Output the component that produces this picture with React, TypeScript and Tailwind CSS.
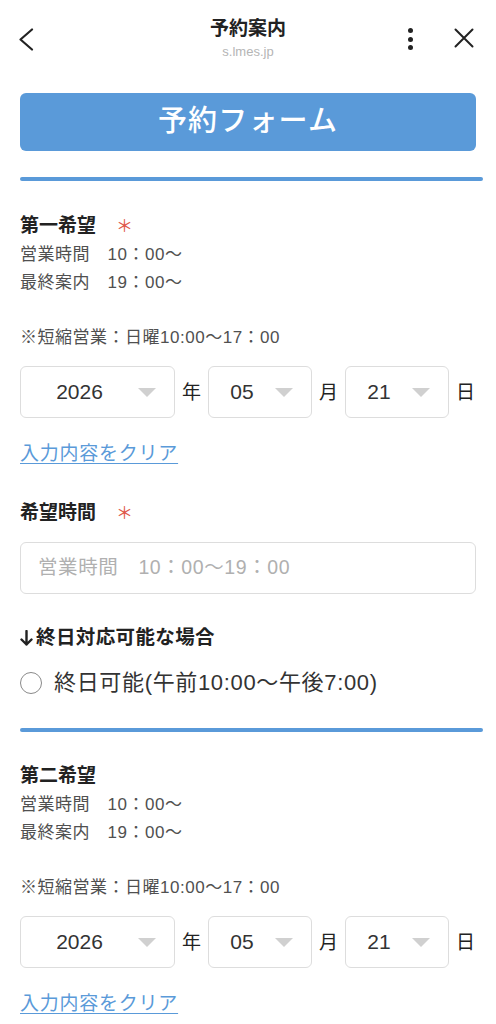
import { ReactNode } from "react";

const FONT = { fontFamily: '"Liberation Sans", "Noto Sans CJK JP", sans-serif' };

const SelectBox = ({ value, width }: { value: string; width: string }) => (
    <div className={`${width} h-[52px] flex items-center border border-[#dddddd] rounded-[6px] bg-white pr-[18px]`}>
        <span className="flex-1 text-center text-[21px] text-[#333333]">{value}</span>
        <svg width="18" height="9" viewBox="0 0 18 9">
            <path d="M0 0 L18 0 L9 9 Z" fill="#d0d0d0" />
        </svg>
    </div>
);

const Unit = ({ children }: { children: ReactNode }) => (
    <span className="w-[19px] text-[19px] leading-none text-[#222222]">{children}</span>
);

const DateRow = () => (
    <div className="flex items-center gap-[7px]">
        <SelectBox value="2026" width="w-[155px]" />
        <Unit>年</Unit>
        <SelectBox value="05" width="w-[104px]" />
        <Unit>月</Unit>
        <SelectBox value="21" width="w-[104px]" />
        <Unit>日</Unit>
    </div>
);

const Label = ({ text, required }: { text: string; required?: boolean }) => (
    <div className="flex items-center h-[28px]">
        <span className="text-[19px] font-bold leading-[28px] text-[#222222]">{text}</span>
        {required && <span className="ml-[20px] text-[17px] leading-none text-[#e0584a]">＊</span>}
    </div>
);

const Section = ({ title, required }: { title: string; required?: boolean }) => (
    <div>
        <Label text={title} required={required} />
        <div className="mt-[1px] text-[17px] leading-[27.5px] tracking-[0.03em] text-[#505050]">
            <p>営業時間　10：00〜</p>
            <p>最終案内　19：00〜</p>
            <p>&nbsp;</p>
            <p>※短縮営業：日曜10:00〜17：00</p>
        </div>
        <div className="mt-[15px]">
            <DateRow />
        </div>
        <a className="block mt-[22px] text-[19px] leading-[28px] tracking-[0.04em] text-[#5a9ad9] underline underline-offset-[3px]">
            入力内容をクリア
        </a>
    </div>
);

const Header = () => (
    <div className="h-[80px] flex items-start justify-between px-[18px]">
        <div className="w-[80px] pt-[28px]">
            <svg width="16" height="23" viewBox="0 0 16 23">
                <path d="M14 1.5 L2.5 11.5 L14 21.5" fill="none" stroke="#222222" strokeWidth="2.2" strokeLinecap="round" strokeLinejoin="round" />
            </svg>
        </div>
        <div className="flex flex-col items-center pt-[17px]">
            <span className="text-[19px] font-bold leading-[24px] text-[#222222]">予約案内</span>
            <span className="mt-[3px] text-[13px] leading-[16px] text-[#b5b5b5]">s.lmes.jp</span>
        </div>
        <div className="w-[80px] flex items-start justify-end gap-[41px] pt-[28px] pr-[4px]">
            <div className="flex flex-col items-center gap-[3.5px]">
                <span className="w-[5px] h-[5px] rounded-full bg-[#222222]" />
                <span className="w-[5px] h-[5px] rounded-full bg-[#222222]" />
                <span className="w-[5px] h-[5px] rounded-full bg-[#222222]" />
            </div>
            <svg width="20" height="20" viewBox="0 0 20 20">
                <path d="M1.5 1.5 L18.5 18.5 M18.5 1.5 L1.5 18.5" fill="none" stroke="#222222" strokeWidth="2" strokeLinecap="round" />
            </svg>
        </div>
    </div>
);

const App = () => {
    return (
        <div className="w-[496px] min-h-[1024px] bg-white overflow-hidden" style={FONT}>
            <Header />
            <div className="px-[20px] pb-[40px]">
                <div className="mt-[13px] h-[58px] rounded-[6px] bg-[#5a9ad9] flex items-center justify-center">
                    <span className="text-[29px] font-medium text-white tracking-[0.04em]">予約フォーム</span>
                </div>
                <div className="mt-[26px] h-[4px] w-[463px] rounded-full bg-[#5a9ad9]" />

                <div className="mt-[31px]">
                    <Section title="第一希望" required />
                </div>

                <div className="mt-[31px]">
                    <Label text="希望時間" required />
                </div>
                <div className="mt-[15px] h-[52px] flex items-center border border-[#dddddd] rounded-[6px] px-[17px]">
                    <span className="text-[19.5px] tracking-[0.03em] text-[#b0b0b0]">営業時間　10：00〜19：00</span>
                </div>

                <div className="mt-[29px] h-[28px] flex items-center">
                    <svg width="13" height="16" viewBox="0 0 13 16" className="mr-[3px] mt-[1px]">
                        <path d="M6.5 1 L6.5 14.5 M1.5 9.5 L6.5 14.5 L11.5 9.5" fill="none" stroke="#222222" strokeWidth="2.4" strokeLinecap="round" strokeLinejoin="round" />
                    </svg>
                    <span className="text-[19.5px] font-bold leading-[28px] tracking-[0.02em] text-[#222222]">終日対応可能な場合</span>
                </div>
                <label className="mt-[16px] h-[32px] flex items-center gap-[12px]">
                    <span className="w-[22px] h-[22px] rounded-full border-[1.5px] border-[#8a8a8a] bg-white" />
                    <span className="text-[22px] leading-[32px] tracking-[0.03em] text-[#333333]">終日可能(午前10:00〜午後7:00)</span>
                </label>

                <div className="mt-[29px] h-[4px] w-[463px] rounded-full bg-[#5a9ad9]" />

                <div className="mt-[30px]">
                    <Section title="第二希望" />
                </div>
            </div>
        </div>
    );
};

export default App;
